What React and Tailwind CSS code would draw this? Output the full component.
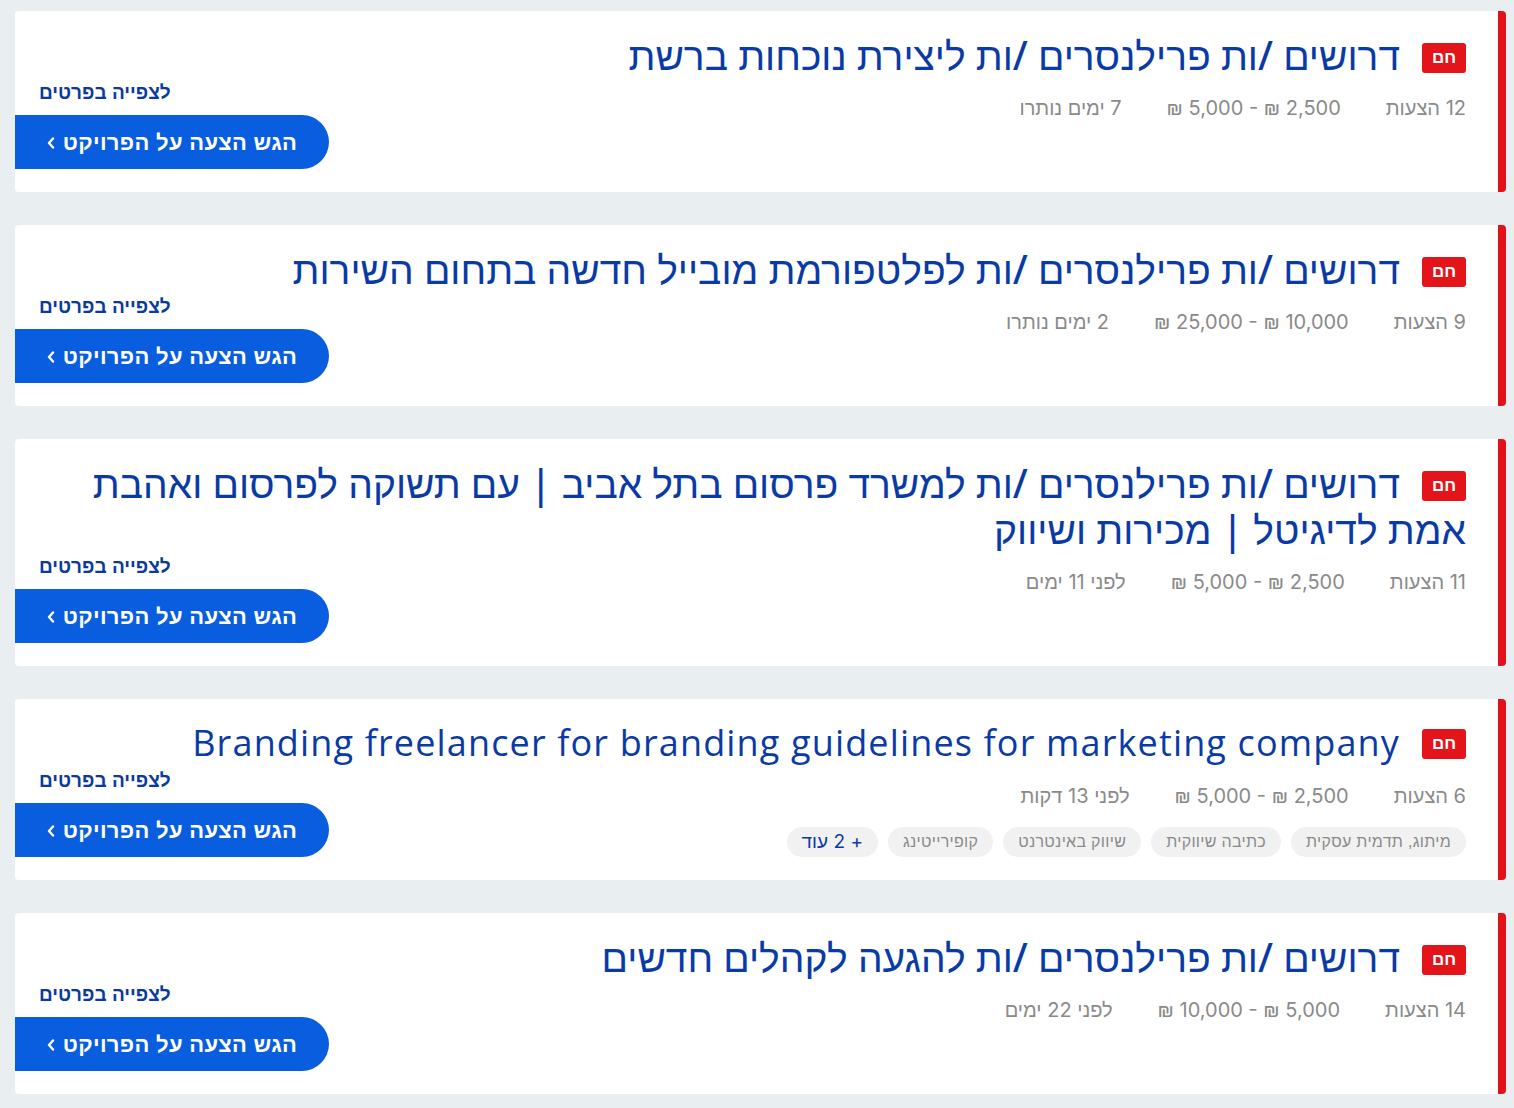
import React from "react";

const cards = [
  {
    title: "דרושים /ות פרילנסרים /ות ליצירת נוכחות ברשת",
    offers: "12 הצעות",
    price: "₪ 5,000 - ₪ 2,500",
    time: "7 ימים נותרו",
    tags: [],
  },
  {
    title: "דרושים /ות פרילנסרים /ות לפלטפורמת מובייל חדשה בתחום השירות",
    offers: "9 הצעות",
    price: "₪ 25,000 - ₪ 10,000",
    time: "2 ימים נותרו",
    tags: [],
  },
  {
    title:
      "דרושים /ות פרילנסרים /ות למשרד פרסום בתל אביב | עם תשוקה לפרסום ואהבת אמת לדיגיטל | מכירות ושיווק",
    offers: "11 הצעות",
    price: "₪ 5,000 - ₪ 2,500",
    time: "לפני 11 ימים",
    tags: [],
  },
  {
    title: "Branding freelancer for branding guidelines for marketing company",
    en: true,
    offers: "6 הצעות",
    price: "₪ 5,000 - ₪ 2,500",
    time: "לפני 13 דקות",
    tags: ["מיתוג, תדמית עסקית", "כתיבה שיווקית", "שיווק באינטרנט", "קופירייטינג"],
    more: "+ 2 עוד",
  },
  {
    title: "דרושים /ות פרילנסרים /ות להגעה לקהלים חדשים",
    offers: "14 הצעות",
    price: "₪ 10,000 - ₪ 5,000",
    time: "לפני 22 ימים",
    tags: [],
  },
];

function Card({ c }) {
  return (
    <div className="bg-white rounded-[4px] border-r-[8px] border-[#e31119] pt-[21px] pb-[23px] overflow-hidden">
      <h2
        className={
          c.en
            ? "mb-[3px] pr-8 pl-8 text-[36px] leading-[46px] font-normal tracking-[1.15px] text-[#0a3aa5] font-['Open_Sans',sans-serif]"
            : "mb-[3px] pr-8 pl-8 text-[39px] leading-[46px] font-medium text-[#0a3aa5] font-['Noto_Sans',sans-serif]"
        }
      >
        <span className="inline-flex items-center justify-center w-[44px] h-[30px] ml-[22px] rounded-[3px] bg-[#e3141a] text-white text-[17px] font-bold leading-none tracking-normal align-[7px] font-['Liberation_Sans',sans-serif]">
          חם
        </span>
        {c.title}
      </h2>
      <div className="flex items-end justify-between">
        <div className="pr-8 flex flex-col">
          <div className="flex gap-[45px] text-[20px] leading-[28px] text-[#8a8a8a] font-['Inter','Noto_Sans',sans-serif]">
            <span>{c.offers}</span>
            <span dir="ltr">{c.price}</span>
            <span>{c.time}</span>
          </div>
          <div className="mt-[17px] h-[30px] flex gap-[10px]">
            {c.tags.map((t) => (
              <span
                key={t}
                className="h-[30px] px-[15px] rounded-full bg-[#f1f1f1] text-[16px] tracking-[0.3px] text-[#8a8a8a] flex items-center font-['Liberation_Sans',sans-serif]"
              >
                {t}
              </span>
            ))}
            {c.more && (
              <span className="h-[30px] px-[15px] rounded-full bg-[#f1f1f1] text-[19px] text-[#0b3aa5] flex items-center font-['Inter','Liberation_Sans',sans-serif]">
                {c.more}
              </span>
            )}
          </div>
        </div>
        <div className="flex flex-col items-end">
          <a className="ml-6 text-[19px] leading-[24px] font-bold text-[#0b3a9e] font-['Liberation_Sans',sans-serif]">
            לצפייה בפרטים
          </a>
          <button className="mt-[10px] w-[314px] h-[54px] rounded-r-full bg-[#095ddf] text-white text-[22px] tracking-[0.3px] font-bold flex items-center justify-center gap-[8px] font-['Liberation_Sans',sans-serif]">
            <span>הגש הצעה על הפרויקט</span>
            <svg width="8" height="12" viewBox="0 0 8 12" className="mt-[2px]">
              <polyline
                points="6,1.5 2,6 6,10.5"
                fill="none"
                stroke="white"
                strokeWidth="2.4"
                strokeLinecap="round"
                strokeLinejoin="round"
              />
            </svg>
          </button>
        </div>
      </div>
    </div>
  );
}

export default function App() {
  return (
    <div dir="rtl" className="min-h-[1108px] bg-[#e9eef0] pt-[11px] pl-[15px] pr-[8px] flex flex-col gap-[33px]">
      {cards.map((c, i) => (
        <Card key={i} c={c} />
      ))}
    </div>
  );
}
